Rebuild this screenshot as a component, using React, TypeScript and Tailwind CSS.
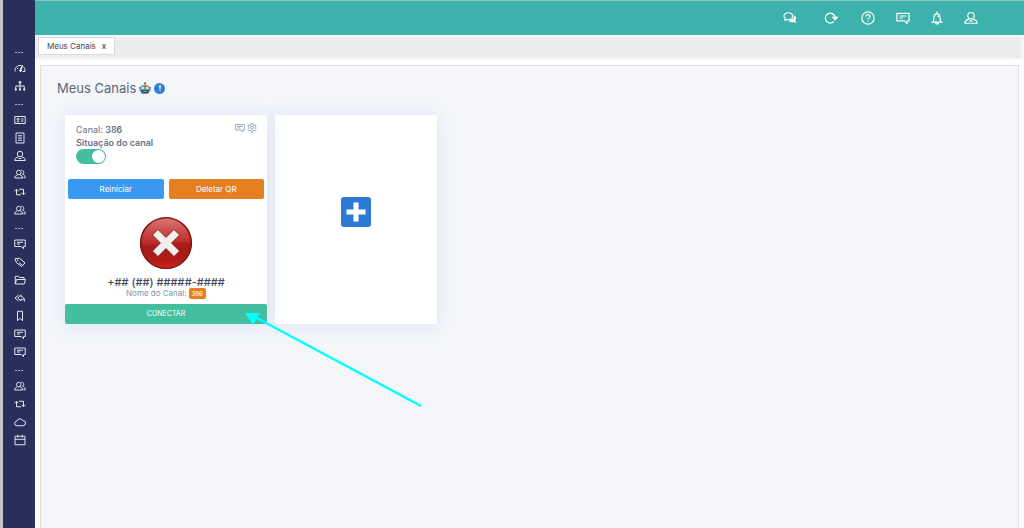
import type { ReactNode } from "react";

type IconName =
  | "gauge" | "tree" | "card" | "doc" | "user" | "users" | "loop" | "message" | "tag"
  | "folder" | "reply" | "bookmark" | "cloud" | "calendar" | "chats" | "refresh" | "help" | "bell" | "gear";

const shapes: Record<IconName, ReactNode> = {
  gauge: (
    <>
      <path d="M2 19v-2a10 10 0 0 1 12-10M19 9.500a10 10 0 0 1 3 7.500v2h-5" />
      <path d="M11 18 17 6l-3 13z" fill="currentColor" />
      <path d="M6 12l2 2" />
    </>
  ),
  tree: (
    <>
      <path d="M12 6v13M3.500 18v-6h17v6" />
      <path d="M10.500 3h3v3h-3zM2.500 17.500h2v3h-2zM11 17.500h2v3h-2zM19.500 17.500h2v3h-2z" fill="currentColor" />
    </>
  ),
  card: (
    <>
      <path d="M1.500 5h21v14h-21z" />
      <path d="M14 10h5M14 14h5M5.500 15.500h5" />
      <circle cx="8" cy="10.500" r="2" />
    </>
  ),
  doc: <path d="M4 2h16v20H4zM8 7.500h8M8 12h8M8 16.500h8" />,
  user: (
    <>
      <circle cx="12" cy="8" r="5.500" />
      <path d="M8.500 14C5 15 1.500 16.500 1.500 21h21c0-4.500-3.500-6-7-7M9 17h6" />
    </>
  ),
  users: (
    <>
      <circle cx="9.500" cy="9" r="4.500" />
      <path d="M7 14c-4 1-5.500 2.500-5.500 6H17c0-3.500-1.500-5-5-6M14.500 4.500c5-1 7 5.500 2.500 8 4 1 5.500 3.500 5.500 7H19" />
    </>
  ),
  loop: <path d="M1 10.500 5 6.500l4 4M5 7v10.500h9M10 6.500h9V17M15 13.500l4 4 4-4" />,
  message: <path d="M1.500 4h21v13H19v4.500L14.500 17h-13zM6 8.500h12M6 12h6" />,
  tag: (
    <>
      <path d="M2 5.500 11 4.500l11 9-6.500 7.500L5 13.500z" />
      <path d="M6 8.500h3M10 13l6 5" />
    </>
  ),
  folder: <path d="M2.500 20V4.500H9L11 7h9v4M2.500 20 5 11h18l-2.500 9z" />,
  reply: <path d="M9 6 2 12l7 6M14 5.500 7.500 12l6.500 6v-3.500c4 0 6 .5 7.500 4C21 12 18 9.500 14 9.500z" />,
  bookmark: <path d="M7 2.500h10v19l-5-5-5 5z" />,
  cloud: <path d="M6 19.500a4.500 4.500 0 0 1-.5-9A6.500 6.500 0 0 1 17.500 9 5.200 5.200 0 0 1 18 19.500z" />,
  calendar: <path d="M2 4.500h20v17H2zM2 10.500h20M7.500 1.500v5M16.500 1.500v5" />,
  chats: (
    <>
      <path d="M9 3c10 0 10 12 0 12-1 0-1.500 0-2.500-.3L3 16l.8-3.200C-.5 9 2 3 9 3z" />
      <path d="M19.500 8c3 2 3.500 5.500 1 8l1.500 4-4-1.500c-3 .8-6 0-7.500-2 5.500 0 9-4 9-8.500z" fill="currentColor" strokeWidth="1" />
    </>
  ),
  refresh: (
    <>
      <path d="M17 18a8.500 8.500 0 1 1 2-8" />
      <path d="M15 10.500h8l-4 4.500z" fill="currentColor" />
    </>
  ),
  help: (
    <>
      <circle cx="12" cy="12" r="10.500" />
      <path d="M8.500 9.500c.3-4.500 7.500-4 7 0-.3 2.300-3.500 2-3.500 5M12 16.500v2" />
    </>
  ),
  bell: <path d="M2.500 19h19M5 19c2-3 1.500-6 2-9.500 1-6 9-6 10 0 .5 3.500 0 6.500 2 9.500M12 1v4M10 19v3h4v-3M13 8.500l2 2" />,
  gear: (
    <>
      <path d="M10 2h4l.7 3 2.300 1 2.700-1.500 2.300 3.200-2 2.300v3l2 2.300-2.300 3.200L17 17.500l-2.300 1L14 22h-4l-.7-3.500-2.300-1-2.700 1L2 15.300 4 13v-3L2 7.700l2.300-3.200L7 6l2.300-1z" />
      <circle cx="12" cy="11.500" r="3.500" />
    </>
  ),
};

function Icon({ name, className }: { name: IconName; className: string }) {
  return (
    <svg viewBox="0 0 24 24" fill="none" stroke="currentColor" strokeWidth="2" strokeLinejoin="round" aria-hidden="true" className={className}>
      {shapes[name]}
    </svg>
  );
}

const menu: (IconName | null)[] = [
  null, "gauge", "tree",
  null, "card", "doc", "user", "users", "loop", "users",
  null, "message", "tag", "folder", "reply", "bookmark", "message", "message",
  null, "users", "loop", "cloud", "calendar",
];

function Sidebar() {
  return (
    <nav aria-label="Menu" className="flex w-8 shrink-0 flex-col items-center bg-[#272f5a] pt-11 text-[#e3e6f2]">
      {menu.map((name, i) =>
        name ? (
          <a key={i} href="#" aria-label={name} className="flex h-[18px] w-full items-center justify-center pb-0.5 pl-0.5">
            <Icon name={name} className="size-3" />
          </a>
        ) : (
          <span key={i} className="flex h-4 items-center gap-px">
            <i className="h-px w-0.5 bg-[#a9afc9]" />
            <i className="h-px w-0.5 bg-[#a9afc9]" />
            <i className="h-px w-0.5 bg-[#a9afc9]" />
          </span>
        ),
      )}
    </nav>
  );
}

function HeaderButton({ name, className }: { name: IconName; className: string }) {
  return (
    <button type="button" aria-label={name} className={`flex h-full items-center justify-center ${className}`}>
      <Icon name={name} className="size-3.5" />
    </button>
  );
}

function Header() {
  return (
    <header className="flex h-[35px] items-center justify-end border-t border-[#8bbfbd] bg-[#3db1ab] pr-9 text-white">
      <HeaderButton name="chats" className="w-11" />
      <HeaderButton name="refresh" className="w-[38px]" />
      <HeaderButton name="help" className="w-[35px]" />
      <HeaderButton name="message" className="w-[35px]" />
      <HeaderButton name="bell" className="w-[34px]" />
      <HeaderButton name="user" className="w-[34px]" />
    </header>
  );
}

function Robot() {
  return (
    <svg viewBox="0 0 24 24" className="size-3" aria-hidden="true">
      <path d="M0 10h4v9H2zM20 10h4l-2 9h-2z" fill="#c9503c" />
      <path d="M4 7h16l3 8-4 8H5l-4-8z" fill="#5ba6b2" />
      <path d="M9 6h6l2 4H7z" fill="#d8694b" />
      <circle cx="12" cy="3" r="2.500" fill="#8b7d5a" />
      <circle cx="7.500" cy="12" r="2.500" fill="#e9efe9" />
      <circle cx="16.500" cy="12" r="2.500" fill="#e9efe9" />
      <path d="M4 16h16l-2 7H6z" fill="#3c5058" />
      <path d="M8 19h8" stroke="#8d9a9f" strokeWidth="2" />
    </svg>
  );
}

function ErrorBadge() {
  return (
    <svg viewBox="0 0 54 54" className="size-[54px]" role="img" aria-label="Desconectado">
      <defs>
        <linearGradient id="ball" x1="0" y1="0" x2="0" y2="1">
          <stop offset="0" stopColor="#c94a47" />
          <stop offset="0.400" stopColor="#b82724" />
          <stop offset="0.600" stopColor="#a31b19" />
          <stop offset="0.850" stopColor="#b01b19" />
          <stop offset="1" stopColor="#e01f1b" />
        </linearGradient>
        <linearGradient id="shine" x1="0" y1="0" x2="0" y2="1">
          <stop offset="0" stopColor="#e9a19e" stopOpacity="0.500" />
          <stop offset="1" stopColor="#d0504c" stopOpacity="0.200" />
        </linearGradient>
      </defs>
      <circle cx="27" cy="27" r="25.500" fill="url(#ball)" stroke="#6f1513" strokeWidth="1.200" />
      <path d="M3 28a24 24 0 0 1 48-2C38 23 18 32 3 28z" fill="url(#shine)" />
      <path d="m19 13.500 8 8 8-8 5.500 5.500-8 8 8 8-5.500 5.500-8-8-8 8-5.500-5.500 8-8-8-8z" fill="#f0f0f0" stroke="#8d1a18" strokeWidth="0.800" />
    </svg>
  );
}

function ChannelCard() {
  return (
    <article className="relative flex w-[202px] flex-col rounded-xs bg-white shadow-[0_2px_16px_2px_#e1e7f5]">
      <div className="flex items-start justify-between pl-[11px] pr-2.5 pt-2">
        <div className="text-[9px] leading-[13px] text-[#66738a]">
          <p>Canal: <span className="font-medium text-[#4f5b70]">386</span></p>
          <label htmlFor="status" className="block font-semibold">Situação do canal</label>
          <span className="relative block h-[15px] w-[30px]">
            <input id="status" type="checkbox" defaultChecked className="peer block h-[15px] w-[30px] appearance-none rounded-full bg-[#b5bdca] checked:bg-[#43bfa0]" />
            <i className="pointer-events-none absolute left-px top-px size-[13px] rounded-full bg-white peer-checked:left-4" />
          </span>
        </div>
        <div className="flex gap-0.5 text-[#8494b3]">
          <button type="button" aria-label="Mensagens"><Icon name="message" className="size-2.5" /></button>
          <button type="button" aria-label="Configurações"><Icon name="gear" className="size-2.5" /></button>
        </div>
      </div>
      <div className="mt-[15px] grid grid-cols-2 gap-[5px] px-[3px] text-[8px] leading-5 text-white">
        <button type="button" className="h-5 rounded-xs bg-[#3a99f1]">Reiniciar</button>
        <button type="button" className="h-5 rounded-xs bg-[#e67e22]">Deletar QR</button>
      </div>
      <div className="flex flex-col items-center pt-[17px]">
        <ErrorBadge />
        <p className="mt-1.5 text-[11px] font-medium leading-3 text-[#3f4a5c]">+## (##) #####-####</p>
        <p className="flex items-center gap-0.5 text-[8px] leading-[11px] text-[#7f92ae]">
          Nome do Canal:
          <span className="rounded-xs bg-[#e67e22] px-[3px] text-[6px] font-medium text-white">386</span>
        </p>
      </div>
      <button type="button" className="mt-auto h-5 w-full rounded-xs bg-[#43bfa0] text-[7px] text-white">CONECTAR</button>
      <svg viewBox="0 0 178 96" className="pointer-events-none absolute left-[180px] top-[197px] h-24 w-[178px] max-w-none" aria-hidden="true">
        <path d="m10 5 166 89" stroke="#00ffff" strokeWidth="2.500" fill="none" />
        <path d="M0 1h15L8 13z" fill="#00ffff" />
      </svg>
    </article>
  );
}

export default function App() {
  return (
    <div className="flex min-h-screen border-l-[3px] border-[#c4c4c6] bg-white font-['Inter',sans-serif]">
      <Sidebar />
      <div className="flex min-w-0 flex-1 flex-col">
        <Header />
        <div className="border-y-2 border-r-[3px] border-[#f3f6fd] bg-[#ededed] pl-[3px]">
          <div className="flex h-[21px] items-start">
            <div className="flex h-[18px] items-center gap-1.5 border border-[#dcdcdc] bg-white px-2 text-[8px] text-[#3f4450]">
              <a href="#">Meus Canais</a>
              <button type="button" aria-label="Fechar" className="font-medium">x</button>
            </div>
          </div>
        </div>
        <main className="mx-[5px] mt-[5px] flex-1 border border-b-0 border-[#dfe0e3] bg-[#f4f6fa] pl-4 pt-3.5">
          <h1 className="flex items-center gap-[3px] text-[13px] leading-4 text-[#5b6678]">
            Meus Canais
            <Robot />
            <span className="flex size-[11px] items-center justify-center rounded-full bg-[#2f7fd6] text-[8px] font-bold text-white">!</span>
          </h1>
          <div className="flex gap-2 pl-2 pt-[19px]">
            <ChannelCard />
            <button type="button" aria-label="Adicionar canal" className="flex h-[209px] w-[162px] items-center justify-center rounded-xs bg-white pb-4 shadow-[0_2px_16px_2px_#e1e7f5]">
              <svg viewBox="0 0 30 30" className="size-[30px]" aria-hidden="true">
                <rect width="30" height="30" rx="3" fill="#2d7bd1" />
                <path d="M12.500 5.500h5v7h7v5h-7v7h-5v-7h-7v-5h7z" fill="#fff" />
              </svg>
            </button>
          </div>
        </main>
      </div>
    </div>
  );
}
